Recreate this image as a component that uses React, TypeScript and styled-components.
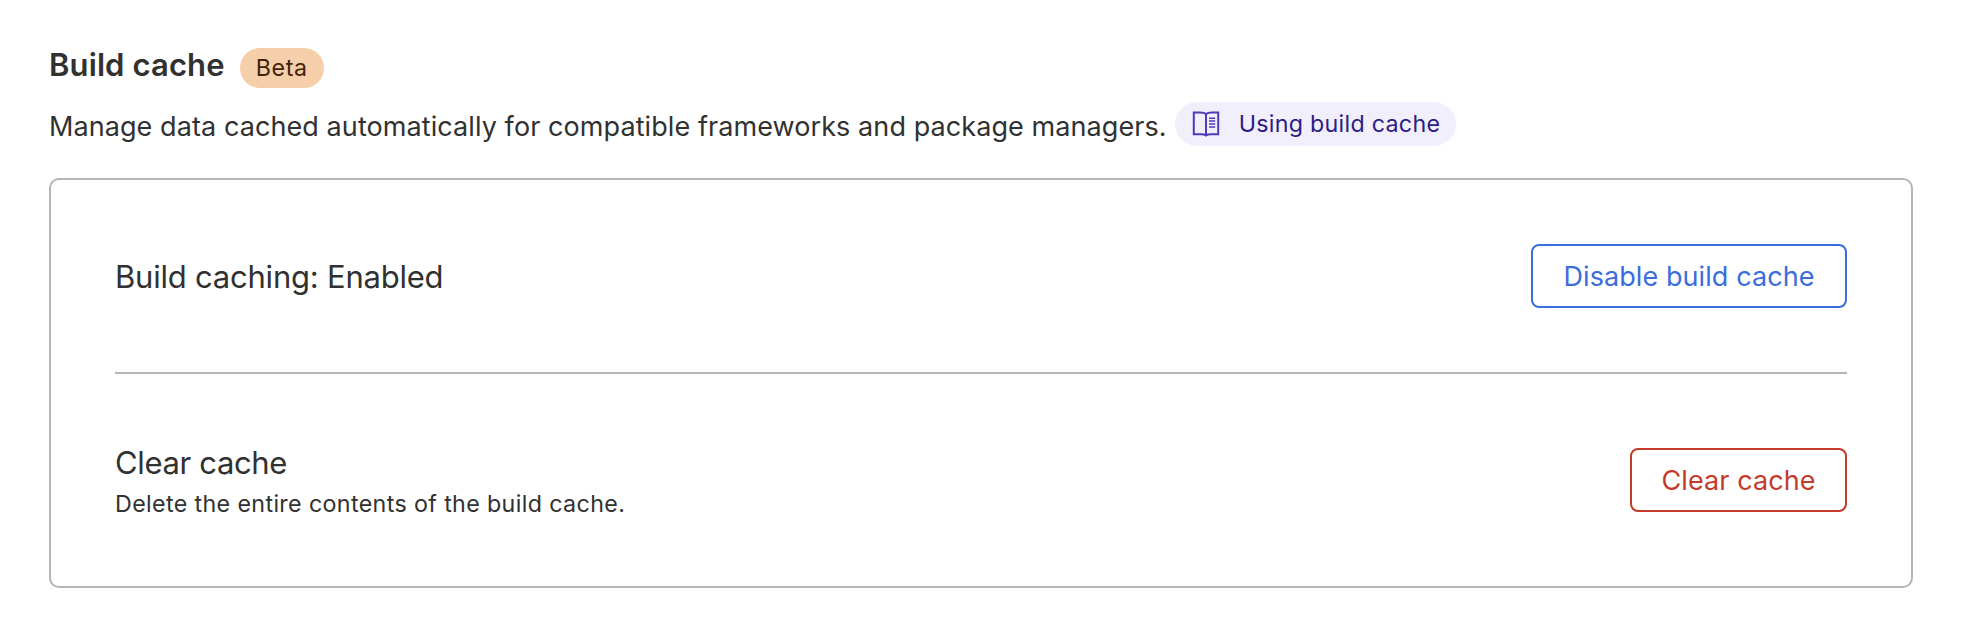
import React from "react";
import styled, { createGlobalStyle } from "styled-components";

const GlobalStyle = createGlobalStyle`
  * { box-sizing: border-box; }
  body {
    margin: 0;
    background: #fff;
    color: #313131;
    font-family: Inter, "Liberation Sans", sans-serif;
    -webkit-font-smoothing: antialiased;
  }
  h2, h3, p { margin: 0; font-weight: 400; white-space: nowrap; }
`;

const Section = styled.section`
  width: 1966px;
  height: 638px;
  padding: 44px 53px 0 49px;
`;

const Header = styled.header`
  display: flex;
  align-items: flex-start;
  gap: 15px;
  height: 58px;
`;

const Title = styled.h2`
  && { font-weight: 600; }
  font-size: 31px;
  line-height: 42px;
  letter-spacing: 0.12px;
`;

const Badge = styled.span`
  display: flex;
  align-items: center;
  justify-content: center;
  width: 84px;
  height: 40px;
  margin-top: 4px;
  padding-bottom: 2px;
  border-radius: 20px;
  background: #f4cfa9;
  color: #43220a;
  font-size: 23.25px;
  letter-spacing: 0.6px;
`;

const Intro = styled.div`
  display: flex;
  align-items: flex-start;
  gap: 8px;
  height: 76px;
`;

const Description = styled.p`
  font-size: 27px;
  line-height: 50px;
  letter-spacing: 0.08px;
`;

const DocsLink = styled.a`
  display: flex;
  align-items: center;
  gap: 19px;
  width: 281px;
  height: 44px;
  padding-left: 17px;
  border-radius: 22px;
  background: #f1effb;
  color: #2c1c87;
  font-size: 23.25px;
  letter-spacing: 0.27px;
  white-space: nowrap;
`;

const DocsLabel = styled.span`
  padding-bottom: 2px;
`;

const Card = styled.div`
  height: 410px;
  padding: 0 64px;
  border: 2px solid #b5b5b5;
  border-radius: 10px;
`;

const Row = styled.div<{ $height: number; $divided?: boolean }>`
  display: flex;
  align-items: center;
  justify-content: space-between;
  height: ${(p) => p.$height}px;
  border-bottom: ${(p) => (p.$divided ? "2px solid #b5b5b5" : "none")};
`;

const RowText = styled.div<{ $offset: number }>`
  padding-top: ${(p) => p.$offset}px;
`;

const RowTitle = styled.h3<{ $tracking: number }>`
  font-size: 31px;
  line-height: 42px;
  letter-spacing: ${(p) => p.$tracking}px;
`;

const RowNote = styled.p`
  font-size: 23.25px;
  line-height: 40px;
  letter-spacing: 0.36px;
`;

const Button = styled.button<{ $tone: string; $width: number }>`
  width: ${(p) => p.$width}px;
  height: 64px;
  padding: 0;
  border: 2px solid ${(p) => p.$tone};
  border-radius: 8px;
  background: #fff;
  color: ${(p) => p.$tone};
  font: 400 27px Inter, "Liberation Sans", sans-serif;
  letter-spacing: 0.08px;
  white-space: nowrap;
`;

const BookIcon = () => (
  <svg width="28" height="26" viewBox="0 0 28 26" fill="none" stroke="#4d3cb8" strokeWidth="2">
    <path d="M14 3C12.500 1.600 10.500 1.400 8 1.400H1.800v21.800H9c2.300 0 3.800.2 5 1.200 1.200-1 2.700-1.200 5-1.200h7.200V1.400H20c-2.500 0-4.500.2-6 1.600v21.400" />
    <path d="M17 7.200h6.200M17 10.100h6.200M17 13h6.200M17 15.900h6.200" strokeWidth="1.500" />
  </svg>
);

export default function App() {
  return (
    <Section>
      <GlobalStyle />
      <Header>
        <Title>Build cache</Title>
        <Badge>Beta</Badge>
      </Header>
      <Intro>
        <Description>Manage data cached automatically for compatible frameworks and package managers.</Description>
        <DocsLink>
          <BookIcon />
          <DocsLabel>Using build cache</DocsLabel>
        </DocsLink>
      </Intro>
      <Card>
        <Row $height={194} $divided>
          <RowText $offset={2}>
            <RowTitle $tracking={-0.22}>Build caching: Enabled</RowTitle>
          </RowText>
          <Button $tone="#3b6ddc" $width={316}>Disable build cache</Button>
        </Row>
        <Row $height={212}>
          <RowText $offset={6}>
            <RowTitle $tracking={-0.35}>Clear cache</RowTitle>
            <RowNote>Delete the entire contents of the build cache.</RowNote>
          </RowText>
          <Button $tone="#c43a2b" $width={217}>Clear cache</Button>
        </Row>
      </Card>
    </Section>
  );
}
